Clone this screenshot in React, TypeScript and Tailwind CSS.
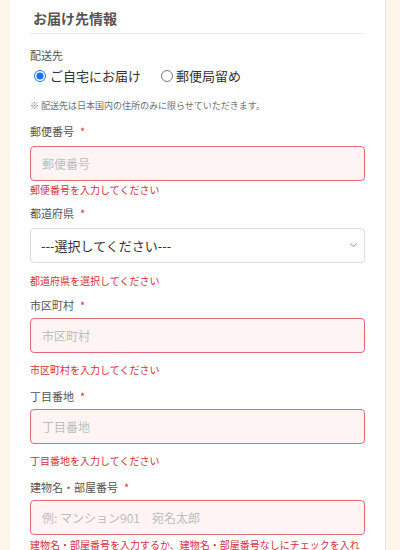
import React from 'react';

const font = { fontFamily: '"Noto Sans CJK JP", "Noto Sans", sans-serif' };

interface FieldProps {
  label: string;
  placeholder: string;
  error: string;
  labelTop: string;
  inputTop: string;
  errorTop: string;
}

const Field: React.FC<FieldProps> = ({ label, placeholder, error, labelTop, inputTop, errorTop }) => (
  <div>
    <div className={`${labelTop} text-[11px] leading-[18px] text-[#555]`}>
      {label}
      <span className="ml-[6px] text-[#e0303e]">*</span>
    </div>
    <input
      type="text"
      placeholder={placeholder}
      className={`${inputTop} block h-[35px] w-full rounded-[4px] border border-[#df6b78] bg-[#fff4f4] px-[11px] text-[12px] text-[#333] placeholder:text-[#bdbdbd] outline-none`}
      style={font}
    />
    <div className={`${errorTop} text-[10px] leading-[16px] text-[#d6303e]`}>{error}</div>
  </div>
);

export default function App() {
  return (
    <div className="min-h-[550px] h-[550px] overflow-hidden bg-[#fdf4ea]" style={font}>
      <div className="ml-[10px] w-[376px] h-[550px] bg-white border-r border-[#e6e6e6] px-[20px] pt-[8px]">
        <h2 className="pb-[5px] border-b border-[#eaeaea] text-[14px] leading-[20px] font-bold text-[#555] pl-[3px]">
          お届け先情報
        </h2>

        <div className="mt-[12px] text-[11px] leading-[18px] text-[#555]">配送先</div>
        <div className="mt-[2px] flex items-center h-[20px] text-[13px] text-[#333]">
          <label className="flex items-center">
            <input type="radio" name="ship" defaultChecked className="m-0 ml-[4px] mr-[4px] h-[12px] w-[12px] accent-[#1a73e8]" />
            ご自宅にお届け
          </label>
          <label className="ml-[20px] flex items-center">
            <input type="radio" name="ship" className="m-0 mr-[3px] h-[12px] w-[12px]" />
            郵便局留め
          </label>
        </div>
        <div className="mt-[13px] text-[9px] leading-[14px] text-[#707070]">
          ※ 配送先は日本国内の住所のみに限らせていただきます。
        </div>

        <Field label="郵便番号" placeholder="郵便番号" error="郵便番号を入力してください" labelTop="mt-[9px]" inputTop="mt-[6px]" errorTop="mt-[1px]" />

        <div>
          <div className="mt-[6px] text-[11px] leading-[18px] text-[#555]">
            都道府県
            <span className="ml-[6px] text-[#e0303e]">*</span>
          </div>
          <div className="relative mt-[6px]">
            <select
              className="block h-[35px] w-full appearance-none rounded-[4px] border border-[#dcdcdc] bg-white px-[10px] text-[13px] text-[#333] outline-none"
              style={font}
              defaultValue=""
            >
              <option value="">---選択してください---</option>
            </select>
            <svg className="pointer-events-none absolute right-[7px] top-[14px]" width="9" height="6" viewBox="0 0 9 6" fill="none">
              <path d="M1 1.5L4.5 4.5L8 1.5" stroke="#999" strokeWidth="1" />
            </svg>
          </div>
          <div className="mt-[10px] text-[10px] leading-[16px] text-[#d6303e]">都道府県を選択してください</div>
        </div>

        <Field label="市区町村" placeholder="市区町村" error="市区町村を入力してください" labelTop="mt-[7px]" inputTop="mt-[4px]" errorTop="mt-[9px]" />
        <Field label="丁目番地" placeholder="丁目番地" error="丁目番地を入力してください" labelTop="mt-[9px]" inputTop="mt-[4px]" errorTop="mt-[9px]" />
        <Field
          label="建物名・部屋番号"
          placeholder="例: マンション901　宛名太郎"
          error="建物名・部屋番号を入力するか、建物名・部屋番号なしにチェックを入れてください"
          labelTop="mt-[9px]"
          inputTop="mt-[4px]"
          errorTop="mt-[2px]"
        />
      </div>
    </div>
  );
}
